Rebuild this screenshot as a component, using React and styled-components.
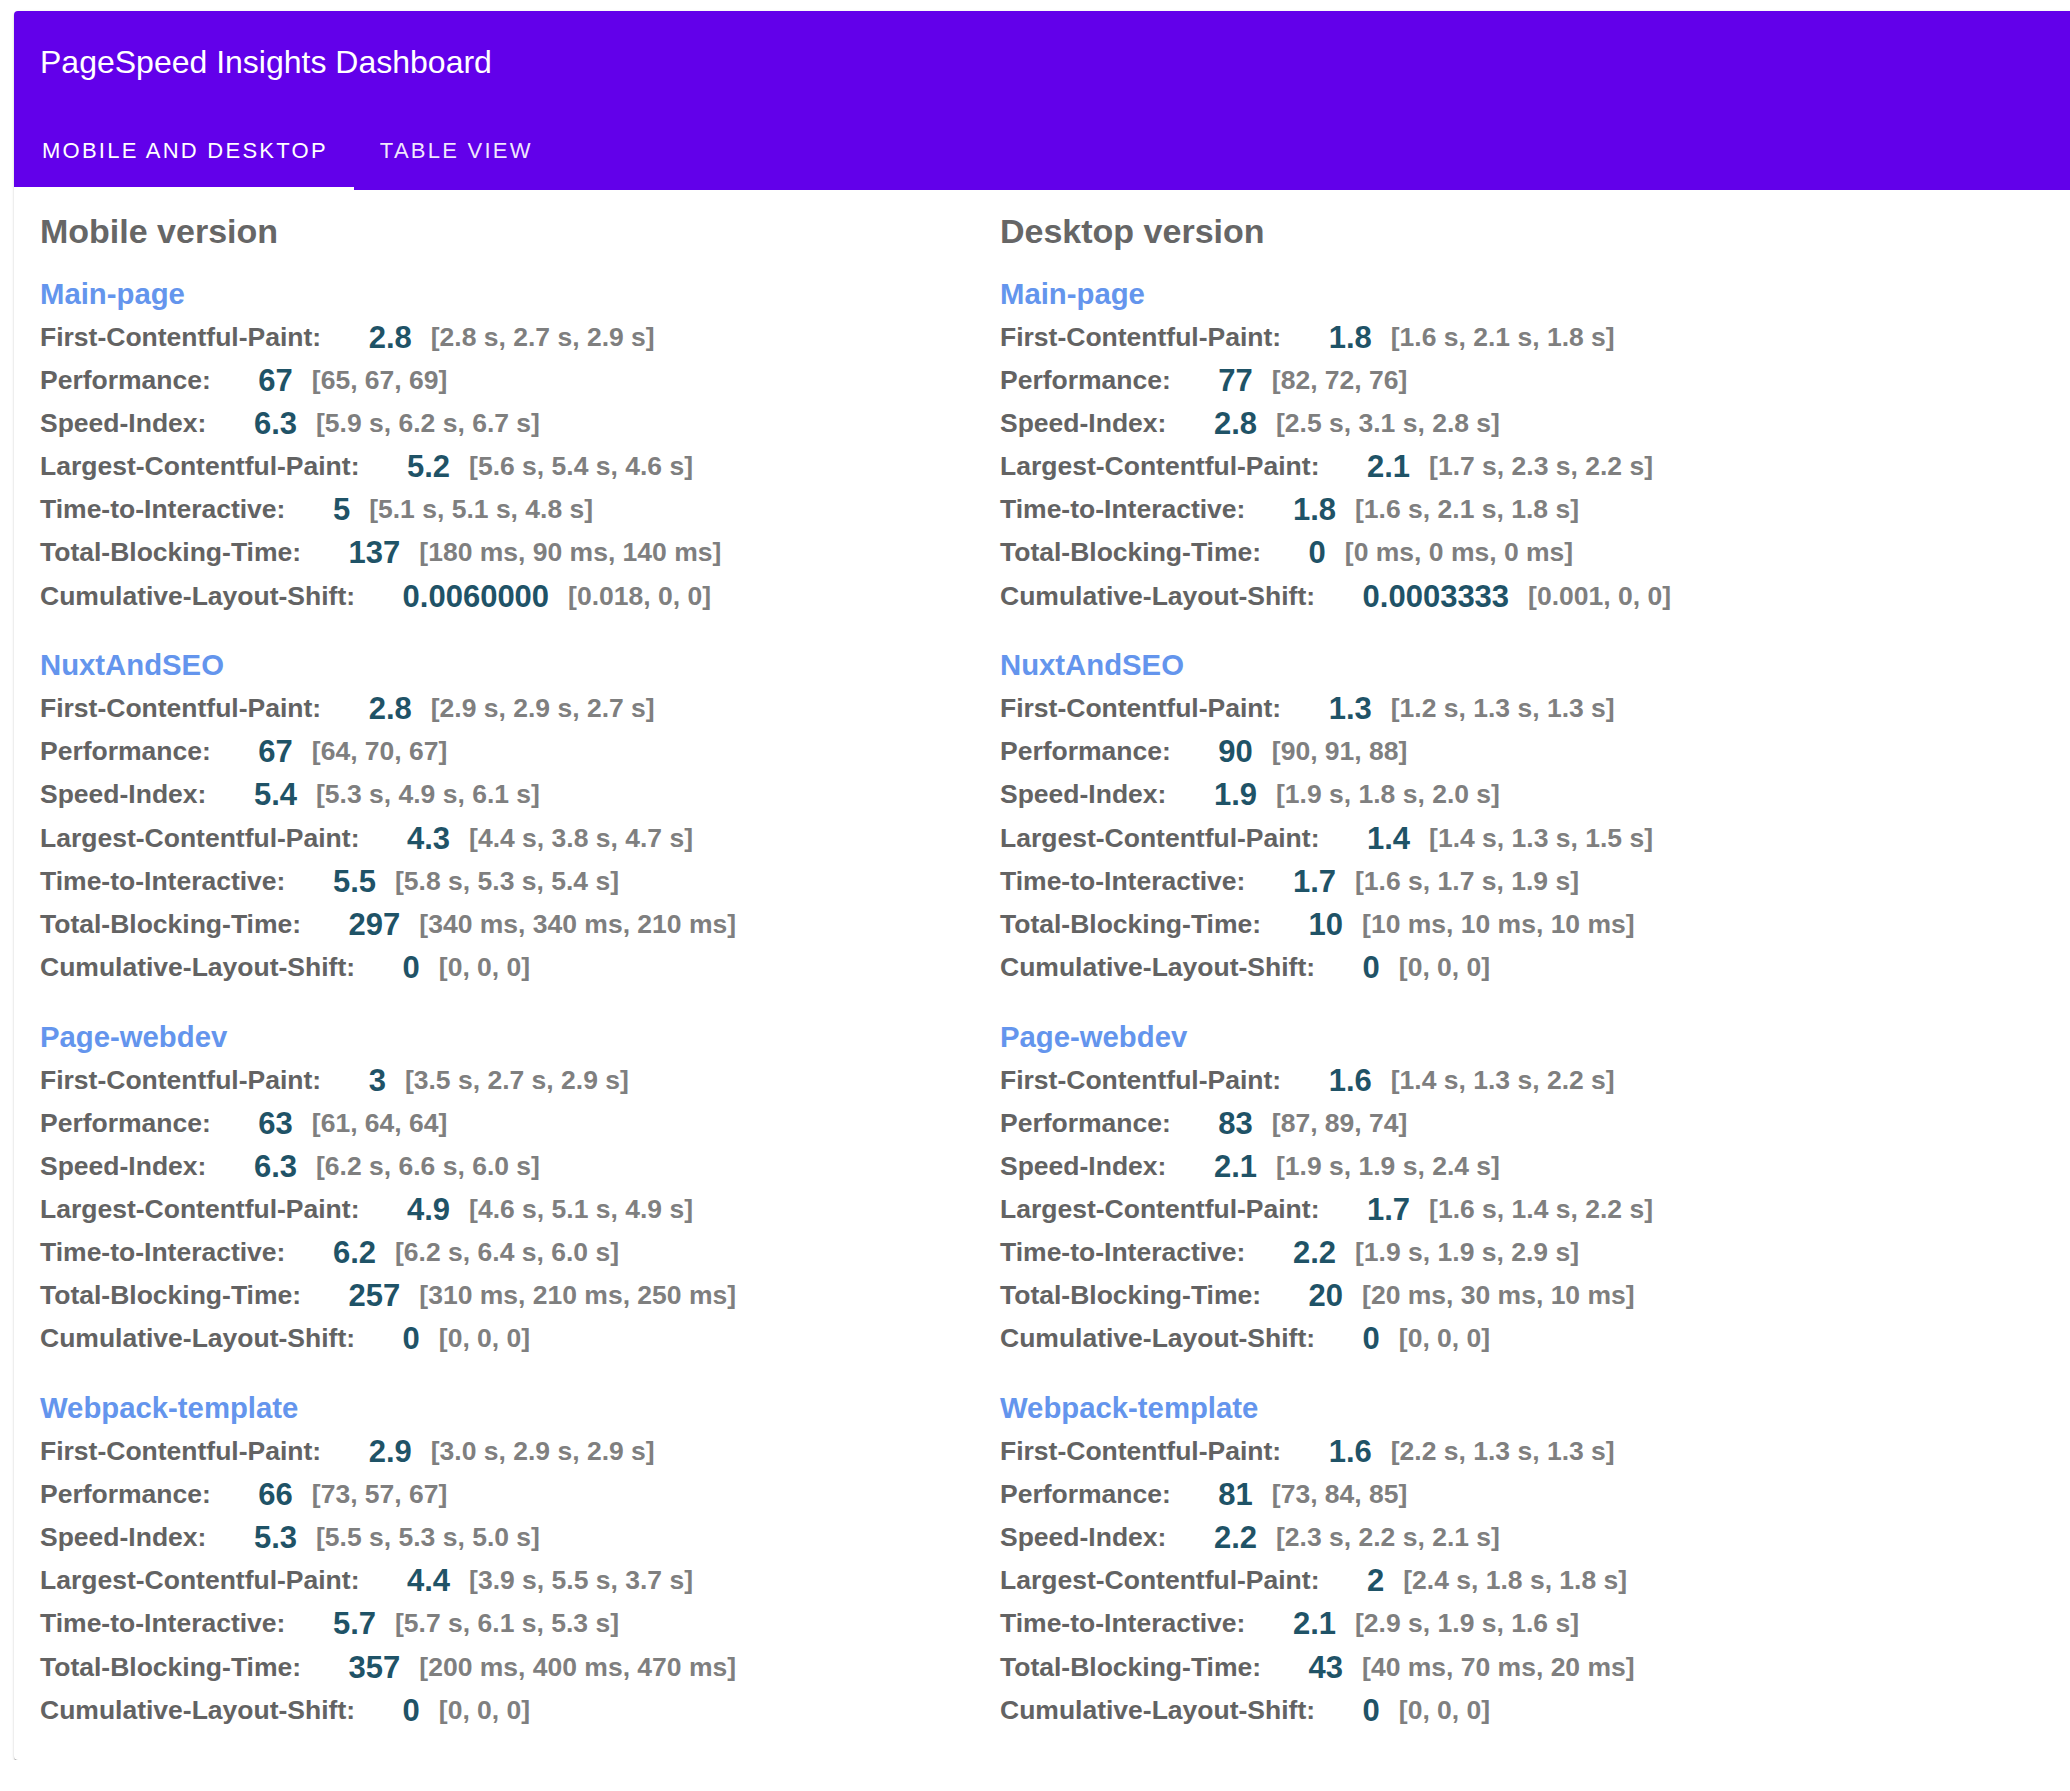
import React from 'react';
import styled, { createGlobalStyle } from 'styled-components';

const GlobalStyle = createGlobalStyle`
  html, body {
    margin: 0;
    padding: 0;
    background: #ffffff;
    overflow-x: hidden;
  }
  body {
    font-family: "Liberation Sans", Arial, Helvetica, sans-serif;
  }
`;

const Page = styled.div`
  padding: 11px 0 0 14px;
`;

const Card = styled.div`
  width: 2070px;
  background: #ffffff;
  border-radius: 4px;
  box-shadow:
    0 2px 1px -1px rgba(0, 0, 0, 0.3),
    0 1px 1px 0 rgba(0, 0, 0, 0.2),
    0 1px 3px 0 rgba(0, 0, 0, 0.14);
`;

const AppBar = styled.header`
  background: #6200ea;
  color: #ffffff;
  border-radius: 4px 4px 0 0;
`;

const Toolbar = styled.div`
  height: 104px;
  padding: 0 0 2px 26px;
  box-sizing: border-box;
  display: flex;
  align-items: center;
`;

const Title = styled.h1`
  margin: 0;
  font-size: 32px;
  line-height: 36px;
  font-weight: 400;
`;

const Tabs = styled.nav`
  height: 75px;
  display: flex;
`;

const Tab = styled.div`
  position: relative;
  display: flex;
  align-items: center;
  padding: 0 26px 4px 28px;
  font-size: 22px;
  line-height: 24px;
  letter-spacing: 2.25px;
  text-transform: uppercase;
  color: ${(p) => (p.$active ? '#ffffff' : 'rgba(255, 255, 255, 0.92)')};

  & + & {
    padding-left: 26px;
  }

  &::after {
    content: '';
    position: absolute;
    left: 0;
    right: 0;
    bottom: 0;
    height: 3px;
    background: ${(p) => (p.$active ? '#ffffff' : 'transparent')};
  }
`;

const Content = styled.main`
  display: grid;
  grid-template-columns: 960px 1fr;
  padding: 21.5px 0 28px 26px;
`;

const Column = styled.section``;

const ColumnTitle = styled.h2`
  margin: 0 0 19.7px;
  font-size: 34px;
  line-height: 39.6px;
  font-weight: 700;
  color: #666666;
`;

const Group = styled.div`
  margin-bottom: 24.5px;

  &:last-child {
    margin-bottom: 0;
  }
`;

const GroupTitle = styled.h3`
  margin: 0;
  font-size: 29.3px;
  line-height: 45px;
  font-weight: 700;
  color: #6495ed;
`;

const Row = styled.div`
  height: 43.13px;
  font-size: 26.5px;
  line-height: 43.13px;
  font-weight: 700;
  white-space: nowrap;
`;

const Label = styled.span`
  color: #636363;
`;

const Value = styled.span`
  margin-left: 47.5px;
  font-size: 31px;
  color: #1f5367;
  vertical-align: -2px;
`;

const Samples = styled.span`
  margin-left: 19px;
  color: #7f7f7f;
`;

const METRICS = [
  'First-Contentful-Paint',
  'Performance',
  'Speed-Index',
  'Largest-Contentful-Paint',
  'Time-to-Interactive',
  'Total-Blocking-Time',
  'Cumulative-Layout-Shift',
];

const mobile = [
  {
    name: 'Main-page',
    rows: [
      ['2.8', '[2.8 s, 2.7 s, 2.9 s]'],
      ['67', '[65, 67, 69]'],
      ['6.3', '[5.9 s, 6.2 s, 6.7 s]'],
      ['5.2', '[5.6 s, 5.4 s, 4.6 s]'],
      ['5', '[5.1 s, 5.1 s, 4.8 s]'],
      ['137', '[180 ms, 90 ms, 140 ms]'],
      ['0.0060000', '[0.018, 0, 0]'],
    ],
  },
  {
    name: 'NuxtAndSEO',
    rows: [
      ['2.8', '[2.9 s, 2.9 s, 2.7 s]'],
      ['67', '[64, 70, 67]'],
      ['5.4', '[5.3 s, 4.9 s, 6.1 s]'],
      ['4.3', '[4.4 s, 3.8 s, 4.7 s]'],
      ['5.5', '[5.8 s, 5.3 s, 5.4 s]'],
      ['297', '[340 ms, 340 ms, 210 ms]'],
      ['0', '[0, 0, 0]'],
    ],
  },
  {
    name: 'Page-webdev',
    rows: [
      ['3', '[3.5 s, 2.7 s, 2.9 s]'],
      ['63', '[61, 64, 64]'],
      ['6.3', '[6.2 s, 6.6 s, 6.0 s]'],
      ['4.9', '[4.6 s, 5.1 s, 4.9 s]'],
      ['6.2', '[6.2 s, 6.4 s, 6.0 s]'],
      ['257', '[310 ms, 210 ms, 250 ms]'],
      ['0', '[0, 0, 0]'],
    ],
  },
  {
    name: 'Webpack-template',
    rows: [
      ['2.9', '[3.0 s, 2.9 s, 2.9 s]'],
      ['66', '[73, 57, 67]'],
      ['5.3', '[5.5 s, 5.3 s, 5.0 s]'],
      ['4.4', '[3.9 s, 5.5 s, 3.7 s]'],
      ['5.7', '[5.7 s, 6.1 s, 5.3 s]'],
      ['357', '[200 ms, 400 ms, 470 ms]'],
      ['0', '[0, 0, 0]'],
    ],
  },
];

const desktop = [
  {
    name: 'Main-page',
    rows: [
      ['1.8', '[1.6 s, 2.1 s, 1.8 s]'],
      ['77', '[82, 72, 76]'],
      ['2.8', '[2.5 s, 3.1 s, 2.8 s]'],
      ['2.1', '[1.7 s, 2.3 s, 2.2 s]'],
      ['1.8', '[1.6 s, 2.1 s, 1.8 s]'],
      ['0', '[0 ms, 0 ms, 0 ms]'],
      ['0.0003333', '[0.001, 0, 0]'],
    ],
  },
  {
    name: 'NuxtAndSEO',
    rows: [
      ['1.3', '[1.2 s, 1.3 s, 1.3 s]'],
      ['90', '[90, 91, 88]'],
      ['1.9', '[1.9 s, 1.8 s, 2.0 s]'],
      ['1.4', '[1.4 s, 1.3 s, 1.5 s]'],
      ['1.7', '[1.6 s, 1.7 s, 1.9 s]'],
      ['10', '[10 ms, 10 ms, 10 ms]'],
      ['0', '[0, 0, 0]'],
    ],
  },
  {
    name: 'Page-webdev',
    rows: [
      ['1.6', '[1.4 s, 1.3 s, 2.2 s]'],
      ['83', '[87, 89, 74]'],
      ['2.1', '[1.9 s, 1.9 s, 2.4 s]'],
      ['1.7', '[1.6 s, 1.4 s, 2.2 s]'],
      ['2.2', '[1.9 s, 1.9 s, 2.9 s]'],
      ['20', '[20 ms, 30 ms, 10 ms]'],
      ['0', '[0, 0, 0]'],
    ],
  },
  {
    name: 'Webpack-template',
    rows: [
      ['1.6', '[2.2 s, 1.3 s, 1.3 s]'],
      ['81', '[73, 84, 85]'],
      ['2.2', '[2.3 s, 2.2 s, 2.1 s]'],
      ['2', '[2.4 s, 1.8 s, 1.8 s]'],
      ['2.1', '[2.9 s, 1.9 s, 1.6 s]'],
      ['43', '[40 ms, 70 ms, 20 ms]'],
      ['0', '[0, 0, 0]'],
    ],
  },
];

const VersionColumn = ({ title, pages }) => (
  <Column>
    <ColumnTitle>{title}</ColumnTitle>
    {pages.map((page) => (
      <Group key={page.name}>
        <GroupTitle>{page.name}</GroupTitle>
        {page.rows.map(([value, samples], i) => (
          <Row key={METRICS[i]}>
            <Label>{METRICS[i]}:</Label>
            <Value>{value}</Value>
            <Samples>{samples}</Samples>
          </Row>
        ))}
      </Group>
    ))}
  </Column>
);

const App = () => (
  <>
    <GlobalStyle />
    <Page>
      <Card>
        <AppBar>
          <Toolbar>
            <Title>PageSpeed Insights Dashboard</Title>
          </Toolbar>
          <Tabs>
            <Tab $active>Mobile and Desktop</Tab>
            <Tab>Table View</Tab>
          </Tabs>
        </AppBar>
        <Content>
          <VersionColumn title="Mobile version" pages={mobile} />
          <VersionColumn title="Desktop version" pages={desktop} />
        </Content>
      </Card>
    </Page>
  </>
);

export default App;
